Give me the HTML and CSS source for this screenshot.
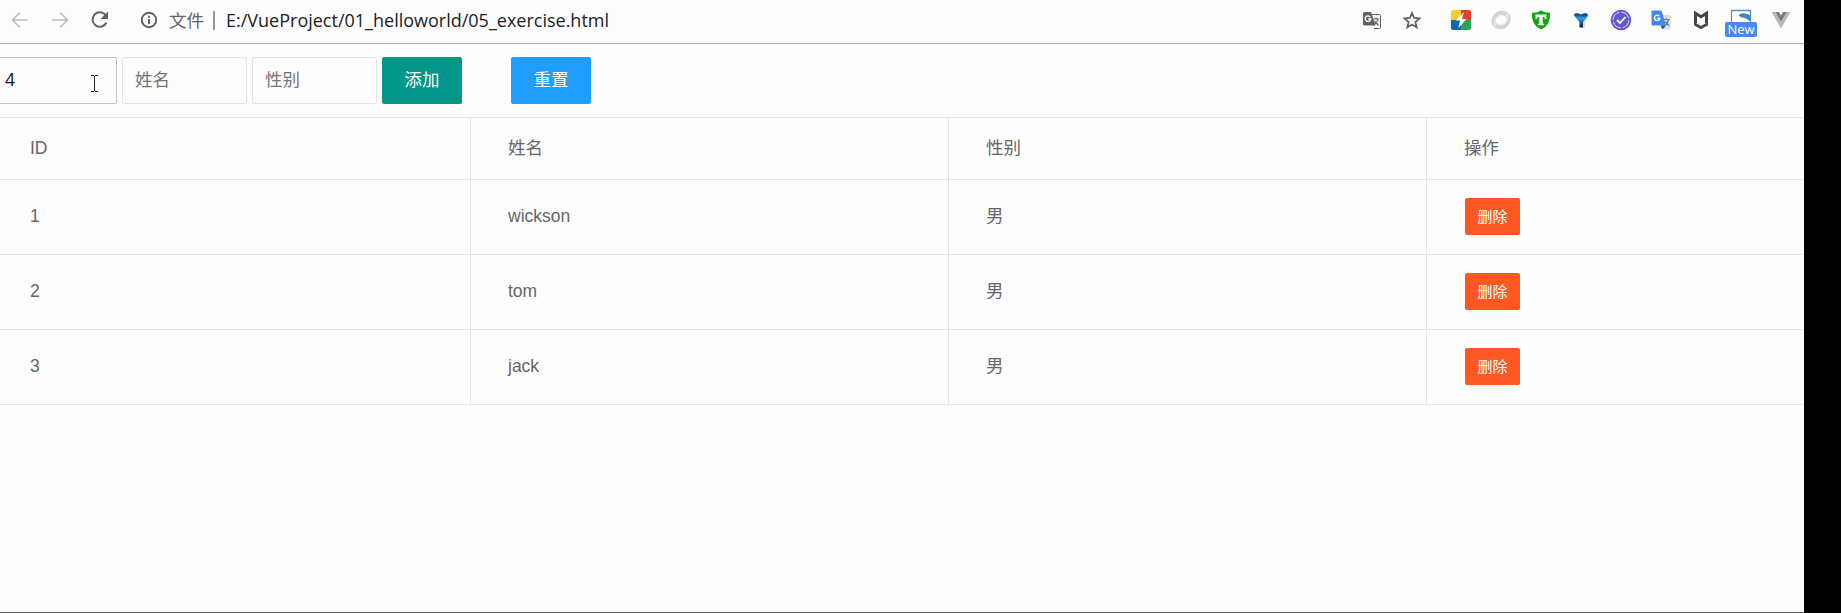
FILE: index.html
```
<!DOCTYPE html>
<html lang="zh-CN">
<head>
<meta charset="utf-8">
<title>05_exercise</title>
<link rel="stylesheet" href="styles.css">
</head>
<body>
<div class="window">
  <header class="toolbar">
    <div class="nav">
      <svg class="icon faded" width="20" height="20" viewBox="0 0 20 20"><path d="M17.500 10H3M10 2.500 2.500 10l7.500 7.500"/></svg>
      <svg class="icon faded" width="20" height="20" viewBox="0 0 20 20"><path d="M2 10h15M10 2.500 17.500 10 10 17.500"/></svg>
      <svg class="icon reload" width="20" height="20" viewBox="0 0 20 20"><path d="M16 5.500A7.300 7.300 0 1 0 16.500 12.500"/><path class="solid" d="M18 1.500v7.500h-7.500z"/></svg>
    </div>
    <div class="address">
      <svg class="icon info" width="18" height="18" viewBox="0 0 18 18"><circle cx="9" cy="9" r="7.200"/><path d="M9 8v5M9 4.700v2"/></svg>
      <span class="scheme">文件</span>
      <span class="bar"></span>
      <span class="url">E:/VueProject/01_helloworld/05_exercise.html</span>
    </div>
    <div class="extensions">
      <span class="slot"><svg width="20" height="20" viewBox="0 0 20 20"><path d="M9 4.500h8.500q1 0 1 1v12q0 1-1 1H12" fill="#fff" stroke="#5f6368"/><path d="M2.500 2H9l4.500 13.500h-11q-1.500 0-1.500-1.500V3.500Q1 2 2.500 2z" fill="#5f6368"/><path d="M8.300 7A2.800 2.800 0 1 0 8.800 9H6.300" fill="none" stroke="#fff" stroke-width="1.400"/><path d="M11 9h6M14 7.500V9M16 9c-.5 3-2 4.500-4 6M12.500 11l4 4.500" fill="none" stroke="#5f6368" stroke-width="1.200"/></svg></span>
      <span class="slot star"><svg width="20" height="20" viewBox="0 0 20 20"><path d="m10 3 2.100 5 5.400.5-4.100 3.600 1.200 5.300-4.600-2.800-4.600 2.800 1.200-5.300-4.100-3.600L7.900 8z" fill="none" stroke="#5f6368" stroke-width="1.800"/></svg></span>
      <span class="slot"><svg width="22" height="22" viewBox="0 0 22 22"><path d="M3 1h8v10H1V3q0-2 2-2z" fill="#f5cf27"/><path d="M11 1h8q2 0 2 2v8H11z" fill="#e43d30"/><path d="M1 11h10v10H3q-2 0-2-2z" fill="#0c68b2"/><path d="M11 11h10v8q0 2-2 2h-8z" fill="#28a451"/><path d="m14 3-8.500 8.500h4.500L8.500 19l8-9H12z" fill="#fff"/></svg></span>
      <span class="slot"><svg width="20" height="20" viewBox="0 0 20 20"><g transform="rotate(-35 10 10)"><ellipse cx="10" cy="10" rx="7.700" ry="6.800" fill="none" stroke="#d3d3d3" stroke-width="4.500"/><path d="M1.500 12Q4 4 13 5.500M18.500 8Q16 16 7 14.500" fill="none" stroke="#f0f0f0" stroke-width="1.200"/></g></svg></span>
      <span class="slot"><svg width="20" height="20" viewBox="0 0 20 20"><path d="M10 .5q4 2.500 9 2.200Q20 15 10 19.500 0 15 1 2.700 6 3 10 .5z" fill="#0aa80d"/><path d="M4.500 4.500h11V9H14l-.8-2h-1.500v6.500l1.500.5v1.200H6.800V14l1.500-.5V7H6.800L6 9H4.500z" fill="#fff"/></svg></span>
      <span class="slot"><svg width="20" height="20" viewBox="0 0 20 20"><defs><linearGradient id="funnel" x2="0" y2="1"><stop stop-color="#06285f"/><stop offset=".35" stop-color="#2f9df0"/><stop offset="1" stop-color="#04152e"/></linearGradient></defs><path d="M5 6.500Q10 3 18.500 5.500L14 13v5h-2z" fill="#ddd"/><path d="M3 5.500Q3 3 6 3.300q2.500.2 4 1.200 1.500-1 4-1.200 3-.3 3 2.200L12 12v5.500H8.500V12z" fill="url(#funnel)"/></svg></span>
      <span class="slot"><svg width="22" height="22" viewBox="0 0 22 22"><circle cx="11" cy="11" r="10.300" fill="#6259cc"/><circle cx="11" cy="11" r="7.800" fill="none" stroke="#dedcfb" stroke-dasharray="10.250 2"/><path d="m7 11 3 3 5.500-6" fill="none" stroke="#fff" stroke-width="1.800"/></svg></span>
      <span class="slot"><svg width="20" height="20" viewBox="0 0 20 20"><path d="M9 5h10.500v14.500H13z" fill="#dcdcdc"/><path d="M1.500.5h9L15 15.500H2Q.5 15.500.5 14V1.500z" fill="#4286ef"/><path d="M9.500 15.500H15l-3.500 4z" fill="#3047a8"/><path d="M8.300 6.200A2.700 2.700 0 1 0 8.800 8.300H6.300" fill="none" stroke="#fff" stroke-width="1.400"/><path d="M12.500 9.500h6M15.500 8v1.500M17.500 9.500q-.5 4-4 6M14 11.500l4 4" fill="none" stroke="#687a84" stroke-width="1.200"/></svg></span>
      <span class="slot"><svg width="20" height="20" viewBox="0 0 20 20"><path d="M3 .5l7 4.500 7-4.500V13h-3V6l-4 2.500L6 6v7H3z" fill="#454545"/><path d="m3 12 7 4 7-4v3.200l-7 4-7-4z" fill="#454545"/></svg></span>
      <span class="slot snap">
        <svg width="22" height="22" viewBox="0 0 22 22"><path d="M1.500 14V1.500h19V14" fill="#fff" stroke="#4e94bf" stroke-width="1.300"/><path d="M8.500 6.500q2-2.500 5.500-2.200 4.500.7 6.500 2.200v6q-3-3-6-3.500-3-.5-6-2.500z" fill="#3b87b7"/></svg>
        <span class="badge">New</span>
      </span>
      <span class="slot"><svg width="20" height="20" viewBox="0 0 20 20"><path d="M.5 2H7l3 5 3-5h6.500L10 18.500z" fill="#b8b8b8"/><path d="M4.500 2H8l2 3.500L12 2h3.500L10 11.500z" fill="#7c7c7c"/></svg></span>
    </div>
  </header>
  <main class="page">
    <form class="form">
      <input class="field focused" value="4">
      <input class="field" placeholder="姓名">
      <input class="field" placeholder="性别">
      <button class="btn add" type="button">添加</button>
      <button class="btn reset" type="button">重置</button>
    </form>
    <table class="table">
      <thead><tr><th>ID</th><th>姓名</th><th>性别</th><th>操作</th></tr></thead>
      <tbody>
        <tr><td>1</td><td>wickson</td><td>男</td><td><button class="btn delete">删除</button></td></tr>
        <tr><td>2</td><td>tom</td><td>男</td><td><button class="btn delete">删除</button></td></tr>
        <tr><td>3</td><td>jack</td><td>男</td><td><button class="btn delete">删除</button></td></tr>
      </tbody>
    </table>
    <svg class="cursor" width="7" height="17" viewBox="0 0 7 17"><path d="M0 .5h3M4 .5h3M3.500 1v15M0 16.500h3M4 16.500h3"/></svg>
  </main>
</div>
</body>
</html>
```
FILE: styles.css
```
* { box-sizing: border-box; }
body {
  margin: 0;
  height: 613px;
  overflow: hidden;
  background: #000;
  font-family: "Liberation Sans", "Noto Sans CJK SC", sans-serif;
}
.window {
  display: flex;
  flex-direction: column;
  width: 1804px;
  height: 613px;
  overflow: hidden;
  background: #fdfdfd;
  border-bottom: 1px solid #626262;
}
.toolbar {
  display: flex;
  align-items: center;
  flex: none;
  height: 44px;
  padding: 0 3px 3px 10px;
  border-bottom: 1px solid #b0b2b1;
}
.nav { display: flex; gap: 20px; }
.icon { display: block; fill: none; stroke: #5f6368; stroke-width: 2; }
.icon.faded { stroke: #b9bbbd; stroke-width: 1.6; }
.icon .solid { fill: #5f6368; stroke: none; }
.address {
  display: flex;
  align-items: center;
  margin-left: 30px;
  font-family: "Open Sans", "Noto Sans CJK SC", sans-serif;
  font-size: 18px;
  line-height: 24px;
  white-space: nowrap;
}
.scheme { margin-left: 11px; color: #5f6368; font-size: 17.500px; }
.bar { width: 2px; height: 19px; margin: 0 11px 0 9px; background: #96989a; }
.url { color: #202124; }
.extensions { display: flex; align-items: center; margin-left: auto; }
.extensions svg { display: block; }
.slot { display: flex; justify-content: center; width: 40px; }
.star { margin-right: 9px; }
.snap { position: relative; }
.badge {
  position: absolute;
  left: 4px;
  top: 13px;
  width: 32px;
  height: 15px;
  border-radius: 2px;
  background: #4688f1;
  color: #fff;
  font: 13px/15px "Open Sans", sans-serif;
  text-align: center;
}
.page { position: relative; flex: 1; }
.form { display: flex; height: 73px; padding-top: 13px; margin-left: -8px; }
.field {
  width: 125px;
  height: 47px;
  margin: 0 5px 0 0;
  padding: 0 0 4px 12px;
  border: 1px solid #e4e4e4;
  border-radius: 2px;
  background: #fdfdfd;
  color: #111;
  font: 17.500px "Open Sans", "Noto Sans CJK SC", sans-serif;
  outline: none;
}
.field::placeholder { color: #757575; opacity: 1; }
.field.focused { border-color: #c2c2c2; }
.btn {
  display: block;
  width: 80px;
  height: 47px;
  padding: 0 0 4px;
  border: 0;
  border-radius: 2px;
  color: #fff;
  font: 17.500px "Liberation Sans", "Noto Sans CJK SC", sans-serif;
}
.add { background: #009688; }
.reset { margin-left: 49px; background: #1e9fff; }
.table .delete {
  width: 55px;
  height: 37px;
  margin-left: 1px;
  padding: 0 0 2px;
  background: #ff5722;
  font-size: 15px;
}
.table {
  width: 1912px;
  margin-left: -7px;
  table-layout: fixed;
  border-collapse: separate;
  border-spacing: 0;
  border-top: 1px solid #e5e5e5;
  color: #666;
  font-size: 17.500px;
}
.table th, .table td {
  height: 75px;
  padding: 0 0 2px 37px;
  border-right: 1px solid #e5e5e5;
  border-bottom: 1px solid #e5e5e5;
  text-align: left;
  font-weight: 400;
  line-height: 25px;
}
.table th { height: 62px; padding-bottom: 0; }
.cursor { position: absolute; left: 91px; top: 31px; fill: none; stroke: #222; }
```
